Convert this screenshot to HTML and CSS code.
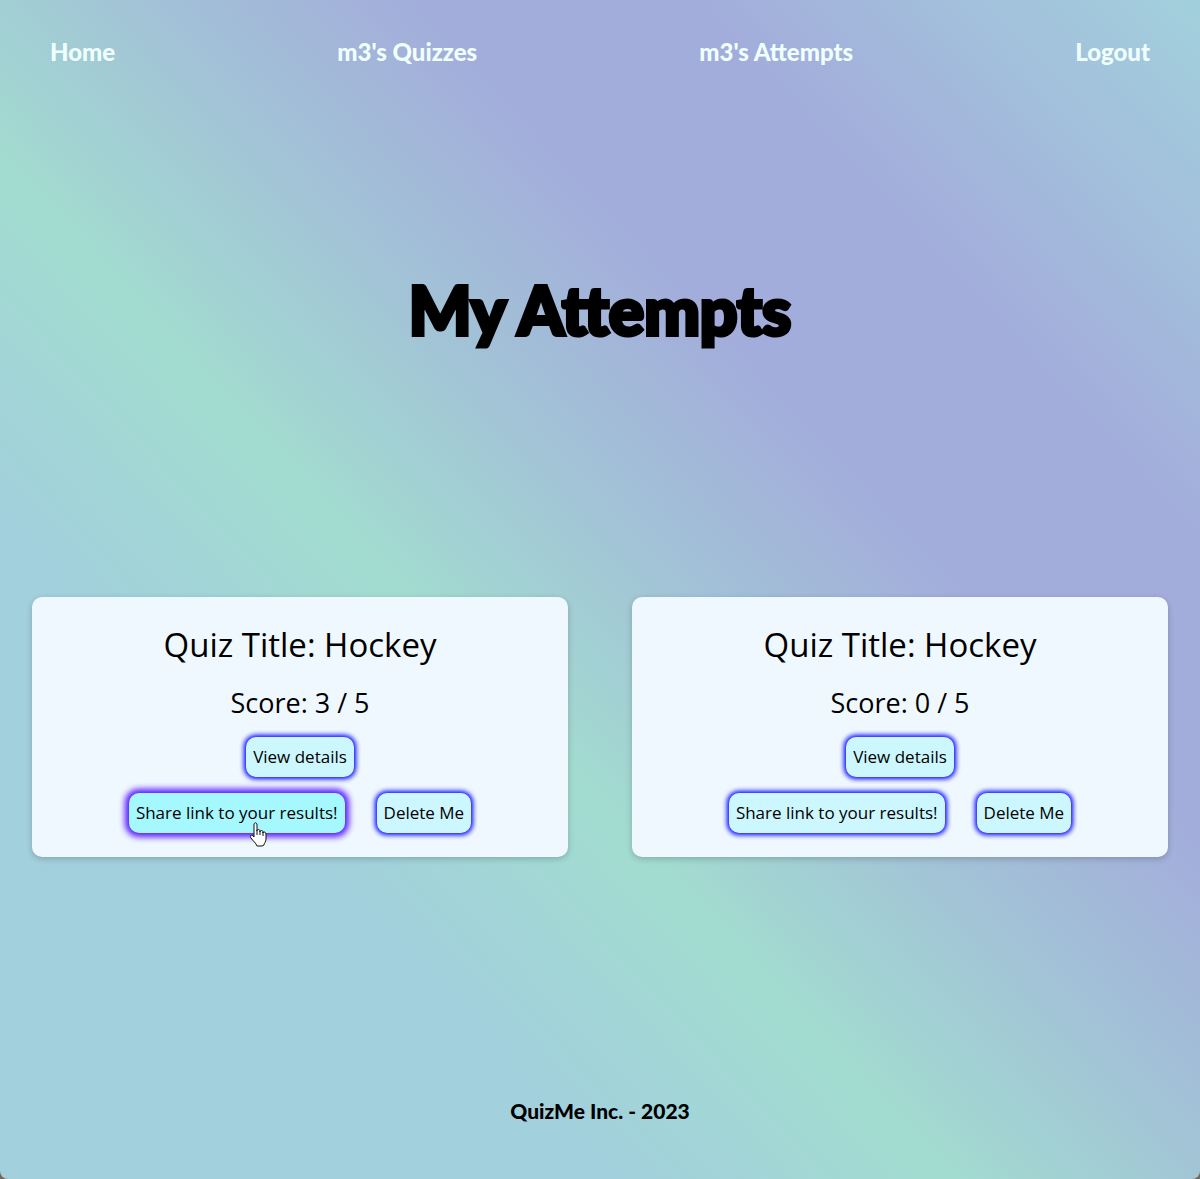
FILE: index.html
```html
<!DOCTYPE html>
<html lang="en">
<head>
  <meta charset="utf-8">
  <meta name="viewport" content="width=device-width, initial-scale=1">
  <title>My Attempts</title>
  <link rel="stylesheet" href="styles.css">
</head>
<body>
  <div class="page">
    <nav class="nav">
      <a href="#">Home</a>
      <a href="#">m3's Quizzes</a>
      <a href="#">m3's Attempts</a>
      <a href="#">Logout</a>
    </nav>
    <h1 class="title">My Attempts</h1>
    <main class="attempts">
      <article class="card">
        <h2 class="card-title">Quiz Title: Hockey</h2>
        <p class="score">Score: 3 / 5</p>
        <button class="btn" type="button">View details</button>
        <div class="actions">
          <button class="btn btn-active" type="button">Share link to your results!
            <svg class="pointer" width="18" height="25" viewBox="0 0 18 25" aria-hidden="true">
              <path d="M5 15V3c0-3 3-3 3 0v6c0-2 3-2 3 0v1c0-2 3-2 3 0v1c0-2 3-1 3 1v5c0 3-2 4-2 6l-2 1H8c-1-3-4-5-6-8-2-3 1-4 3-1z" fill="#fff" stroke="#111" stroke-linejoin="round"/>
              <path d="M8 8v5M11 9v4M14 10v4" fill="none" stroke="#111"/>
            </svg>
          </button>
          <button class="btn" type="button">Delete Me</button>
        </div>
      </article>
      <article class="card">
        <h2 class="card-title">Quiz Title: Hockey</h2>
        <p class="score">Score: 0 / 5</p>
        <button class="btn" type="button">View details</button>
        <div class="actions">
          <button class="btn" type="button">Share link to your results!</button>
          <button class="btn" type="button">Delete Me</button>
        </div>
      </article>
    </main>
    <footer class="footer">QuizMe Inc. - 2023</footer>
  </div>
</body>
</html>
```
FILE: styles.css
```css
* {
  box-sizing: border-box;
}

html {
  background: #75665f;
}

body {
  margin: 0;
  font-family: "Open Sans", sans-serif;
  color: #000;
}

.page {
  display: flex;
  flex-direction: column;
  min-height: 100vh;
  border-radius: 0 0 8px 8px;
  background: linear-gradient(47deg, #a2d0dc 0%, #a2d0dc 27%, #a2dcd0 41%, #a2c4d6 53%, #a3addb 66%, #a3addb 78%, #a2d0dc 100%);
}

.nav {
  display: flex;
  justify-content: space-between;
  padding: 32px 50px;
}

.nav a {
  font-family: Lato, sans-serif;
  font-size: 24px;
  font-weight: 900;
  line-height: 40px;
  color: #f0ffff;
  text-decoration: none;
}

.title {
  margin: 148px 0 229px;
  font-family: Lato, sans-serif;
  font-size: 66px;
  font-weight: 900;
  line-height: 116px;
  text-align: center;
  -webkit-text-stroke: 4px #000;
}

.attempts {
  display: grid;
  grid-template-columns: 1fr 1fr;
  gap: 64px;
  padding: 0 32px;
}

.card {
  display: flex;
  flex-direction: column;
  align-items: center;
  padding: 24px;
  border-radius: 10px;
  background: #f0f8ff;
  box-shadow: 0 2px 6px rgba(0, 0, 0, 0.2);
}

.card-title {
  margin: 0 0 16px;
  font-size: 33px;
  font-weight: 400;
  line-height: 48px;
}

.score {
  margin: 0 0 16px;
  font-size: 27px;
  line-height: 36px;
}

.btn {
  position: relative;
  height: 40px;
  padding: 0 7px 2px;
  border: 0;
  border-radius: 10px;
  background: #ccf7ff;
  box-shadow: 0 0 5px 2px #0000ff;
  font-family: "Open Sans", sans-serif;
  font-size: 17px;
  color: #000;
}

.btn-active {
  background: #a6f8ff;
  box-shadow: 0 0 6px 4px #5a1aff;
}

.pointer {
  position: absolute;
  top: 29px;
  left: 120px;
}

.actions {
  display: flex;
  gap: 32px;
  margin-top: 16px;
}

.footer {
  margin-top: auto;
  padding: 48px;
  font-family: Lato, sans-serif;
  font-size: 21px;
  font-weight: 900;
  line-height: 40px;
  text-align: center;
}
```
